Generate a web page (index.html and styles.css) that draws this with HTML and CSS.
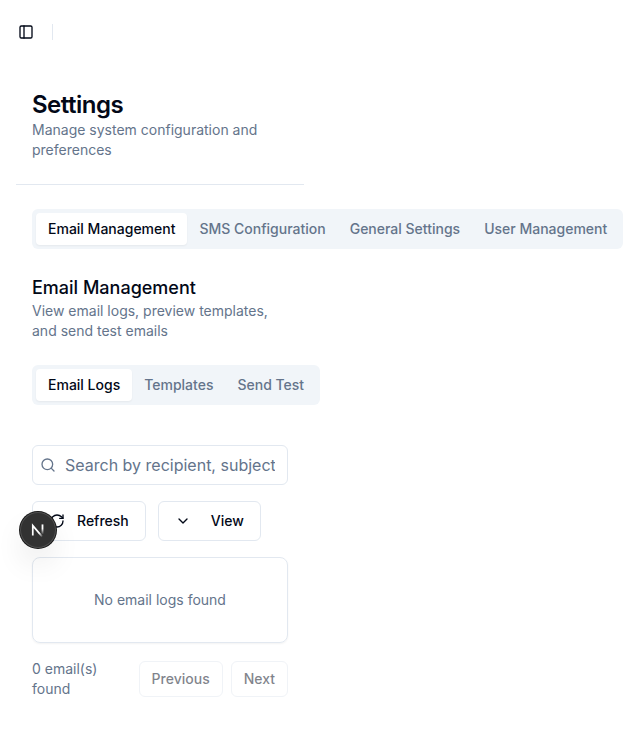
FILE: index.html
```html
<!DOCTYPE html>
<html lang="en">
<head>
<meta charset="utf-8">
<title>Settings</title>
<link rel="stylesheet" href="styles.css">
</head>
<body>
<header class="topbar">
  <svg class="icon" viewBox="0 0 24 24"><rect width="18" height="18" x="3" y="3" rx="2"/><path d="M9 3v18"/></svg>
  <span class="separator"></span>
</header>
<main class="page">
  <div class="page-head">
    <h1>Settings</h1>
    <p>Manage system configuration and preferences</p>
  </div>
  <div class="content">
    <nav class="tabs">
      <button class="tab active">Email Management</button><button class="tab">SMS Configuration</button><button class="tab">General Settings</button><button class="tab">User Management</button>
    </nav>
    <section class="intro">
      <h2>Email Management</h2>
      <p>View email logs, preview templates, and send test emails</p>
    </section>
    <nav class="tabs">
      <button class="tab active">Email Logs</button><button class="tab">Templates</button><button class="tab">Send Test</button>
    </nav>
    <section class="logs">
      <div class="search">
        <svg class="icon" viewBox="0 0 24 24"><circle cx="11" cy="11" r="8"/><path d="m21 21-4.3-4.3"/></svg>
        <input type="text" placeholder="Search by recipient, subject...">
      </div>
      <div class="actions">
        <button class="btn"><svg class="icon" viewBox="0 0 24 24"><path d="M3 12a9 9 0 0 1 9-9 9.75 9.75 0 0 1 6.74 2.74L21 8"/><path d="M21 3v5h-5"/><path d="M21 12a9 9 0 0 1-9 9 9.75 9.75 0 0 1-6.74-2.74L3 16"/><path d="M8 16H3v5"/></svg>Refresh</button>
        <button class="btn view"><svg class="icon" viewBox="0 0 24 24"><path d="m6 9 6 6 6-6"/></svg>View</button>
      </div>
      <div class="card">No email logs found</div>
      <footer class="pager">
        <p>0 email(s) found</p>
        <div class="pager-buttons">
          <button class="btn small" disabled>Previous</button>
          <button class="btn small" disabled>Next</button>
        </div>
      </footer>
    </section>
  </div>
</main>
<div class="dev-badge">
  <svg viewBox="0 0 40 40" fill="none">
    <defs>
      <linearGradient id="diagonal" x1="17" y1="16" x2="26" y2="27" gradientUnits="userSpaceOnUse"><stop offset=".6" stop-color="#fff"/><stop offset="1" stop-color="#fff" stop-opacity="0"/></linearGradient>
      <linearGradient id="stem" x1="25" y1="14" x2="25" y2="25" gradientUnits="userSpaceOnUse"><stop offset=".4" stop-color="#fff"/><stop offset="1" stop-color="#fff" stop-opacity="0"/></linearGradient>
    </defs>
    <path d="M14.2 26V15.2L24.6 27.4" stroke="url(#diagonal)" stroke-width="1.9"/>
    <path d="M24 13.8h2V25h-2z" fill="url(#stem)"/>
  </svg>
</div>
</body>
</html>
```

FILE: styles.css
```css
* { box-sizing: border-box; margin: 0; }
body { width: 624px; height: 755px; overflow: hidden; background: #fff; color: #020817; font: 14px/20px Inter, sans-serif; }
button, input { font: inherit; color: inherit; }
p { color: #64748b; }
.icon { width: 16px; height: 16px; flex: none; fill: none; stroke: currentColor; stroke-width: 2; stroke-linecap: round; stroke-linejoin: round; }
.topbar { display: flex; align-items: center; height: 64px; padding-left: 18px; gap: 18px; }
.separator { width: 1px; height: 16px; background: #e2e8f0; }
.page { width: 320px; padding: 0 16px; }
.page-head { height: 121px; padding: 25px 16px 0; border-bottom: 1px solid #e2e8f0; }
h1 { height: 31px; font-size: 24px; line-height: 32px; font-weight: 600; letter-spacing: -.5px; }
.content { padding: 24px 16px 0; }
.tabs { display: flex; width: max-content; height: 40px; padding: 4px; border-radius: 6px; background: #f1f5f9; color: #64748b; }
.tab { height: 32px; padding: 0 12px; border: 0; border-radius: 4px; background: none; font-weight: 500; white-space: nowrap; }
.tab.active { background: #fff; color: #020817; box-shadow: 0 1px 2px rgba(0,0,0,.05); }
.intro { padding: 25px 0 24px; }
h2 { height: 27px; font-size: 18px; line-height: 28px; font-weight: 500; }
.logs { display: grid; grid-template-columns: minmax(0, 1fr); gap: 16px; padding-top: 40px; }
.search { display: flex; align-items: center; height: 40px; padding: 0 12px 0 7px; gap: 9px; border: 1px solid #e2e8f0; border-radius: 6px; color: #64748b; }
.search input { width: 0; min-width: 0; flex: 1; padding: 0; border: 0; outline: 0; font-size: 16px; line-height: 24px; background: none; }
.search input::placeholder { color: #64748b; }
.actions { display: flex; gap: 12px; }
.btn { display: flex; align-items: center; justify-content: center; height: 40px; padding: 0 16px; gap: 12px; border: 1px solid #e2e8f0; border-radius: 6px; background: #fff; font-weight: 500; }
.btn.view { gap: 20px; }
.card { display: grid; place-items: center; height: 86px; border: 1px solid #e2e8f0; border-radius: 8px; color: #64748b; box-shadow: 0 1px 2px rgba(0,0,0,.05); }
.pager { display: flex; align-items: center; justify-content: space-between; }
.pager p { width: 80px; }
.pager-buttons { display: flex; gap: 8px; }
.btn.small { height: 36px; padding: 0 12px; opacity: .5; }
.dev-badge { position: absolute; left: 20px; top: 512px; width: 36px; height: 36px; border-radius: 50%; background: #323232; box-shadow: 0 0 0 1px #171717, inset 0 0 0 1px rgba(255,255,255,.14), 0 16px 32px -8px rgba(0,0,0,.24); }
.dev-badge svg { display: block; width: 36px; height: 36px; }
```
